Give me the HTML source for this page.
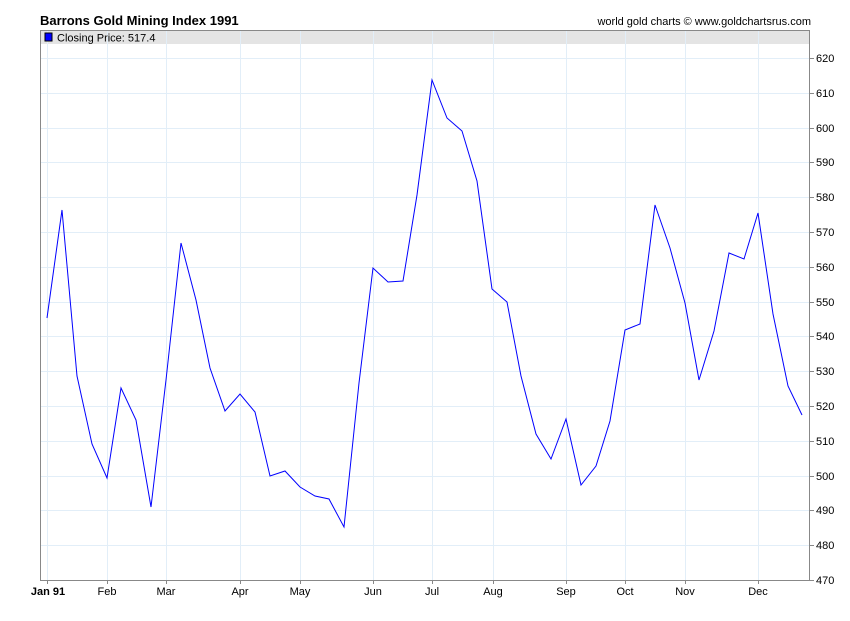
<!DOCTYPE html><html><head><meta charset="utf-8"><style>body{margin:0;background:#fff;width:850px;height:616px;overflow:hidden;font-family:"Liberation Sans",sans-serif}</style></head><body>
<svg width="850" height="616" xmlns="http://www.w3.org/2000/svg" font-family="Liberation Sans, sans-serif">
<text x="40" y="25" font-size="13" font-weight="bold" fill="#000">Barrons Gold Mining Index 1991</text>
<text x="811" y="25" font-size="11" text-anchor="end" fill="#000">world gold charts © www.goldchartsrus.com</text>
<rect x="40" y="30" width="770" height="14" fill="#e4e4e4"/>
<g stroke="#e2eef8" stroke-width="1">
<line x1="47.5" y1="30" x2="47.5" y2="580"/><line x1="107.5" y1="30" x2="107.5" y2="580"/><line x1="166.5" y1="30" x2="166.5" y2="580"/><line x1="240.5" y1="30" x2="240.5" y2="580"/><line x1="300.5" y1="30" x2="300.5" y2="580"/><line x1="373.5" y1="30" x2="373.5" y2="580"/><line x1="432.5" y1="30" x2="432.5" y2="580"/><line x1="493.5" y1="30" x2="493.5" y2="580"/><line x1="566.5" y1="30" x2="566.5" y2="580"/><line x1="625.5" y1="30" x2="625.5" y2="580"/><line x1="685.5" y1="30" x2="685.5" y2="580"/><line x1="758.5" y1="30" x2="758.5" y2="580"/>
<line x1="40" y1="58.5" x2="810" y2="58.5"/><line x1="40" y1="93.5" x2="810" y2="93.5"/><line x1="40" y1="128.5" x2="810" y2="128.5"/><line x1="40" y1="162.5" x2="810" y2="162.5"/><line x1="40" y1="197.5" x2="810" y2="197.5"/><line x1="40" y1="232.5" x2="810" y2="232.5"/><line x1="40" y1="267.5" x2="810" y2="267.5"/><line x1="40" y1="302.5" x2="810" y2="302.5"/><line x1="40" y1="336.5" x2="810" y2="336.5"/><line x1="40" y1="371.5" x2="810" y2="371.5"/><line x1="40" y1="406.5" x2="810" y2="406.5"/><line x1="40" y1="441.5" x2="810" y2="441.5"/><line x1="40" y1="476.5" x2="810" y2="476.5"/><line x1="40" y1="510.5" x2="810" y2="510.5"/><line x1="40" y1="545.5" x2="810" y2="545.5"/>
</g>
<rect x="40.5" y="30.5" width="769" height="550" fill="none" stroke="#888"/>
<rect x="45" y="33" width="7" height="8" fill="#0000ff" stroke="#000" stroke-width="1"/>
<text x="57" y="41.5" font-size="11">Closing Price: 517.4</text>
<polyline fill="none" stroke="#0000ff" stroke-width="1" points="47,318 62,210 77,376 92,444 107,478 121,388 136,420 151,507 166,380 181,243 196,300 210,368 225,411 240,394 255,412 270,476 285,471 300,487 315,496 329,499 344,527 359,383 373,268 388,282 403,281 417,195 432,80 447,118 462,131 477,181 492,289 507,302 521,376 536,434 551,459 566,419 581,485 596,466 610,421 625,330 640,324 655,205 670,248 685,303 699,380 714,331 729,253 744,259 758,213 773,314 788,386 802,415"/>
<g stroke="#888"><line x1="810" y1="58.5" x2="814" y2="58.5"/><line x1="810" y1="93.5" x2="814" y2="93.5"/><line x1="810" y1="128.5" x2="814" y2="128.5"/><line x1="810" y1="162.5" x2="814" y2="162.5"/><line x1="810" y1="197.5" x2="814" y2="197.5"/><line x1="810" y1="232.5" x2="814" y2="232.5"/><line x1="810" y1="267.5" x2="814" y2="267.5"/><line x1="810" y1="302.5" x2="814" y2="302.5"/><line x1="810" y1="336.5" x2="814" y2="336.5"/><line x1="810" y1="371.5" x2="814" y2="371.5"/><line x1="810" y1="406.5" x2="814" y2="406.5"/><line x1="810" y1="441.5" x2="814" y2="441.5"/><line x1="810" y1="476.5" x2="814" y2="476.5"/><line x1="810" y1="510.5" x2="814" y2="510.5"/><line x1="810" y1="545.5" x2="814" y2="545.5"/><line x1="810" y1="580.5" x2="814" y2="580.5"/>
<line x1="47.5" y1="580" x2="47.5" y2="584"/><line x1="107.5" y1="580" x2="107.5" y2="584"/><line x1="166.5" y1="580" x2="166.5" y2="584"/><line x1="240.5" y1="580" x2="240.5" y2="584"/><line x1="300.5" y1="580" x2="300.5" y2="584"/><line x1="373.5" y1="580" x2="373.5" y2="584"/><line x1="432.5" y1="580" x2="432.5" y2="584"/><line x1="493.5" y1="580" x2="493.5" y2="584"/><line x1="566.5" y1="580" x2="566.5" y2="584"/><line x1="625.5" y1="580" x2="625.5" y2="584"/><line x1="685.5" y1="580" x2="685.5" y2="584"/><line x1="758.5" y1="580" x2="758.5" y2="584"/></g>
<g font-size="11" fill="#000"><text x="816" y="62">620</text><text x="816" y="97">610</text><text x="816" y="132">600</text><text x="816" y="166">590</text><text x="816" y="201">580</text><text x="816" y="236">570</text><text x="816" y="271">560</text><text x="816" y="306">550</text><text x="816" y="340">540</text><text x="816" y="375">530</text><text x="816" y="410">520</text><text x="816" y="445">510</text><text x="816" y="480">500</text><text x="816" y="514">490</text><text x="816" y="549">480</text><text x="816" y="584">470</text></g>
<g font-size="11" text-anchor="middle" fill="#000"><text x="48" y="595" font-weight="bold">Jan 91</text><text x="107" y="595">Feb</text><text x="166" y="595">Mar</text><text x="240" y="595">Apr</text><text x="300" y="595">May</text><text x="373" y="595">Jun</text><text x="432" y="595">Jul</text><text x="493" y="595">Aug</text><text x="566" y="595">Sep</text><text x="625" y="595">Oct</text><text x="685" y="595">Nov</text><text x="758" y="595">Dec</text></g>
</svg></body></html>
